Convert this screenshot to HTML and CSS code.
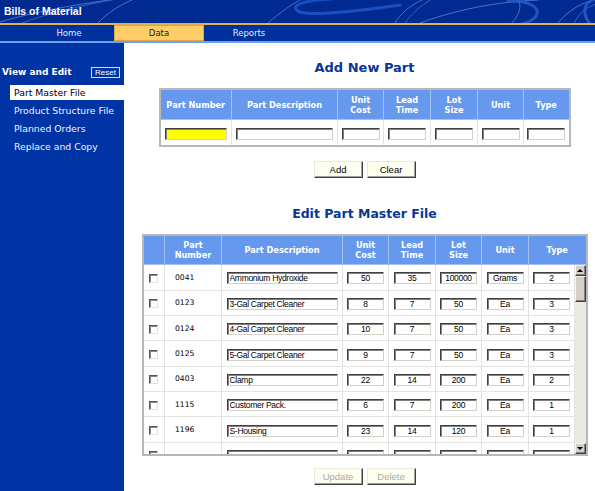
FILE: index.html
```html
<!DOCTYPE html>
<html lang="en">
<head>
  <meta charset="UTF-8">
  <title>Bills of Material</title>
  <link rel="stylesheet" href="styles.css">
</head>
<body>

  <div class="banner">
    <svg class="swirls" width="595" height="23" viewBox="0 0 595 23">
      <g fill="none" stroke-linecap="round">
        <path d="M0 22 C40 10 90 2 140 -4" stroke="#4a70c8" stroke-width="1"/>
        <path d="M22 23 C60 9 105 1 128 -3" stroke="#3a62c0" stroke-width="1"/>
        <path d="M98 23 C108 12 122 4 134 -1" stroke="#4a70c8" stroke-width="1"/>
        <path d="M268 23 C282 11 292 4 302 -1" stroke="#4a70c8" stroke-width="1"/>
        <path d="M332 -1 C300 0 288 7 300 12 C312 16 360 11 400 5" stroke="#1b4fbe" stroke-width="3"/>
        <path d="M395 23 C400 14 410 5 424 -1" stroke="#4a70c8" stroke-width="1"/>
        <path d="M405 23 C411 14 420 6 432 -1" stroke="#3a62c0" stroke-width="1"/>
        <path d="M420 23 C450 12 490 2 538 0" stroke="#4a70c8" stroke-width="1"/>
        <path d="M508 1 C542 0 546 18 522 24" stroke="#1f55c4" stroke-width="3"/>
        <path d="M512 23 C520 14 522 6 518 -1" stroke="#4a70c8" stroke-width="1"/>
        <path d="M558 23 C568 10 583 2 597 -1" stroke="#4a70c8" stroke-width="1"/>
        <path d="M574 23 C580 12 588 6 597 4" stroke="#3a62c0" stroke-width="1"/>
        <path d="M600 -2 C585 0 580 10 590 24" stroke="#1f55c4" stroke-width="3"/>
      </g>
    </svg>
    <h1>Bills of Material</h1>
  </div>

  <div class="nav">
    <a href="#">Home</a>
    <a href="#" class="active">Data</a>
    <a href="#">Reports</a>
  </div>

  <div class="page">
    <div class="sidebar">
      <div class="side-head">
        <span>View and Edit</span>
        <span class="reset">Reset</span>
      </div>
      <div class="side-menu">
        <a href="#" class="current">Part Master File</a>
        <a href="#">Product Structure File</a>
        <a href="#">Planned Orders</a>
        <a href="#">Replace and Copy</a>
      </div>
    </div>

    <div class="main">
      <h2>Add New Part</h2>
      <table class="grid add-grid">
        <colgroup>
          <col style="width:72px"><col style="width:106px"><col style="width:46px"><col style="width:47px">
          <col style="width:47px"><col style="width:46px"><col style="width:46px">
        </colgroup>
        <tr>
          <th>Part Number</th>
          <th>Part Description</th>
          <th>Unit<br>Cost</th>
          <th>Lead<br>Time</th>
          <th>Lot<br>Size</th>
          <th>Unit</th>
          <th>Type</th>
        </tr>
        <tr>
          <td><input class="fld w-num yellow" type="text"></td>
          <td><input class="fld w-desc" type="text"></td>
          <td><input class="fld w-sm" type="text"></td>
          <td><input class="fld w-sm" type="text"></td>
          <td><input class="fld w-sm" type="text"></td>
          <td><input class="fld w-sm" type="text"></td>
          <td><input class="fld w-sm" type="text"></td>
        </tr>
      </table>

      <div class="btns">
        <button class="btn">Add</button>
        <button class="btn">Clear</button>
      </div>

      <h2 class="second">Edit Part Master File</h2>
      <div class="edit-box">
        <table class="grid edit-head">
          <colgroup>
            <col style="width:21px"><col style="width:57px"><col style="width:121px"><col style="width:46px">
            <col style="width:47px"><col style="width:46px"><col style="width:47px"><col style="width:57px">
          </colgroup>
          <tr>
            <th></th>
            <th>Part<br>Number</th>
            <th>Part Description</th>
            <th>Unit<br>Cost</th>
            <th>Lead<br>Time</th>
            <th>Lot<br>Size</th>
            <th>Unit</th>
            <th>Type</th>
          </tr>
        </table>
        <div class="edit-body">
          <div class="rows">
            <table class="grid edit-rows">
              <colgroup>
                <col style="width:21px"><col style="width:57px"><col style="width:121px"><col style="width:46px">
                <col style="width:47px"><col style="width:46px"><col style="width:47px"><col style="width:46px">
              </colgroup>
              <tbody id="partRows"></tbody>
            </table>
          </div>
          <div class="scrollbar">
            <div class="sb-btn"><span class="arrow-up"></span></div>
            <div class="sb-thumb"></div>
            <div class="sb-track"></div>
            <div class="sb-btn"><span class="arrow-down"></span></div>
          </div>
        </div>
      </div>

      <div class="btns bottom">
        <button class="btn" disabled>Update</button>
        <button class="btn" disabled>Delete</button>
      </div>
    </div>
  </div>

  <script>
    const parts = [
      ["0041", "Ammonium Hydroxide", "50", "35", "100000", "Grams", "2"],
      ["0123", "3-Gal Carpet Cleaner", "8", "7", "50", "Ea", "3"],
      ["0124", "4-Gal Carpet Cleaner", "10", "7", "50", "Ea", "3"],
      ["0125", "5-Gal Carpet Cleaner", "9", "7", "50", "Ea", "3"],
      ["0403", "Clamp", "22", "14", "200", "Ea", "2"],
      ["1115", "Customer Pack.", "6", "7", "200", "Ea", "1"],
      ["1196", "S-Housing", "23", "14", "120", "Ea", "1"],
      ["", "", "", "", "", "", ""]
    ];

    const body = document.getElementById("partRows");
    parts.forEach(function(p) {
      const tr = document.createElement("tr");
      let html = '<td><span class="chk"></span></td>';
      html += '<td class="num">' + p[0] + '</td>';
      html += '<td><input class="fld e-desc" type="text" value="' + p[1] + '"></td>';
      for (let i = 2; i < 7; i++) {
        html += '<td><input class="fld e-sm" type="text" value="' + p[i] + '"></td>';
      }
      tr.innerHTML = html;
      body.appendChild(tr);
    });
  </script>

</body>
</html>
```

FILE: styles.css
```css
body {
  margin: 0;
  font-family: "DejaVu Sans", Verdana, sans-serif;
  background: #fff;
  overflow: hidden;
}

.banner {
  position: relative;
  height: 23px;
  background: #002a90;
  border-bottom: 2px solid #dcb14e;
  overflow: hidden;
}

.swirls {
  position: absolute;
  left: 0;
  top: 0;
}

.banner h1 {
  position: relative;
  margin: 0;
  padding-left: 4px;
  font: bold 10.5px/23px "Liberation Sans", Arial, sans-serif;
  color: #fff;
}

.nav {
  display: flex;
  height: 16px;
  padding-left: 24px;
  background: #00309c;
  border-bottom: 2px solid #6f9ff2;
}

.nav a {
  width: 90px;
  text-align: center;
  font-size: 8.5px;
  line-height: 16px;
  color: #e6ecff;
  text-decoration: none;
}

.nav a.active {
  background: #ffcc66;
  color: #222;
  box-shadow: inset 0 0 0 1px #d9a84a;
}

.page {
  display: flex;
  height: 448px;
}

.sidebar {
  width: 124px;
  background: #0034a4;
  padding-top: 23px;
}

.side-head {
  display: flex;
  justify-content: space-between;
  align-items: center;
  height: 12px;
  padding: 0 4px 0 2px;
  margin-bottom: 7px;
}

.side-head span {
  font-weight: bold;
  font-size: 9px;
  color: #fff;
}

.side-head .reset {
  font: normal 8px/9px "Liberation Sans", Arial, sans-serif;
  border: 1px solid #d0dcf8;
  padding: 0 3px;
}

.side-menu a {
  display: block;
  margin: 0 0 3px 10px;
  padding-left: 4px;
  height: 15px;
  line-height: 15px;
  font-size: 9.3px;
  color: #eef2ff;
  text-decoration: none;
}

.side-menu a.current {
  background: #fff;
  color: #000;
}

.main {
  flex: 1;
  padding-left: 10px;
}

.main h2 {
  margin: 17px 0 12px;
  font-size: 13px;
  line-height: 16px;
  color: #0a3597;
  text-align: center;
}

.main h2.second {
  margin: 28px 0 12px;
  font-size: 12.5px;
}

.grid {
  border-collapse: collapse;
  table-layout: fixed;
}

.grid th {
  background: #6699ee;
  color: #fff;
  font-size: 8.2px;
  line-height: 10px;
  font-weight: bold;
  border: 1px solid #a6c0f0;
  padding: 0;
}

.grid td {
  border: 1px solid #e3e3e3;
  text-align: center;
  padding: 0;
}

.add-grid {
  margin: 0 auto;
  border: 2px solid #b8b8b8;
}

.add-grid th {
  height: 29px;
}

.add-grid td {
  height: 25px;
}

.fld {
  box-sizing: border-box;
  height: 12px;
  margin: 0;
  padding: 0 2px;
  border: 1px solid;
  border-color: #404040 #d4d0c8 #d4d0c8 #404040;
  box-shadow: inset 1px 1px 0 #808080;
  background: #fff;
  color: #000;
  font: 8.5px/10px "Liberation Sans", Arial, sans-serif;
  letter-spacing: -0.3px;
  vertical-align: middle;
}

.yellow {
  background: #ffff00;
}

.w-num { width: 62px; }
.w-desc { width: 97px; }
.w-sm { width: 38px; }

.btns {
  display: flex;
  justify-content: center;
  gap: 4px;
  margin-top: 14px;
}

.btns.bottom {
  margin-top: 12px;
}

.btn {
  width: 49px;
  height: 17px;
  box-sizing: border-box;
  padding: 0;
  background: #fffff0;
  border: 1px solid;
  border-color: #e8e8e0 #404040 #404040 #e8e8e0;
  box-shadow: inset -1px -1px 0 #a0a0a0;
  font: 9.5px "Liberation Sans", Arial, sans-serif;
  color: #000;
}

.btn:disabled {
  color: #a8a8a8;
}

.edit-box {
  width: 442px;
  margin: 0 auto;
  border: 2px solid #b8b8b8;
}

.edit-head {
  width: 442px;
}

.edit-head th {
  height: 28px;
  border-top: none;
}

.edit-head th:first-child {
  border-left: none;
}

.edit-head th:last-child {
  border-right: none;
}

.edit-body {
  display: flex;
  height: 189px;
}

.rows {
  width: 431px;
  overflow: hidden;
}

.edit-rows {
  width: 431px;
}

.edit-rows tr {
  height: 25.33px;
}

.edit-rows td:first-child {
  border-left: none;
}

.edit-rows tr:first-child td {
  border-top: none;
}

.edit-rows td.num {
  text-align: left;
  padding-left: 10px;
  font-size: 7.6px;
  color: #000;
}

.e-desc {
  width: 111px;
  text-align: left;
}

.e-sm {
  width: 37px;
  text-align: center;
}

.chk {
  display: inline-block;
  width: 9px;
  height: 9px;
  box-sizing: border-box;
  border: 1px solid;
  border-color: #555 #e0e0e0 #e0e0e0 #555;
  box-shadow: inset 1px 1px 0 #888;
  vertical-align: middle;
}

.scrollbar {
  width: 11px;
  display: flex;
  flex-direction: column;
  background: #ebe9e4;
}

.sb-btn,
.sb-thumb {
  box-sizing: border-box;
  background: #d4d0c8;
  border: 1px solid;
  border-color: #f4f4f4 #404040 #404040 #f4f4f4;
  box-shadow: inset -1px -1px 0 #808080;
}

.sb-btn {
  height: 11px;
  display: flex;
  align-items: center;
  justify-content: center;
}

.sb-thumb {
  height: 26px;
}

.sb-track {
  flex: 1;
}

.arrow-up {
  border-left: 3px solid transparent;
  border-right: 3px solid transparent;
  border-bottom: 3px solid #000;
}

.arrow-down {
  border-left: 3px solid transparent;
  border-right: 3px solid transparent;
  border-top: 3px solid #000;
}
```
